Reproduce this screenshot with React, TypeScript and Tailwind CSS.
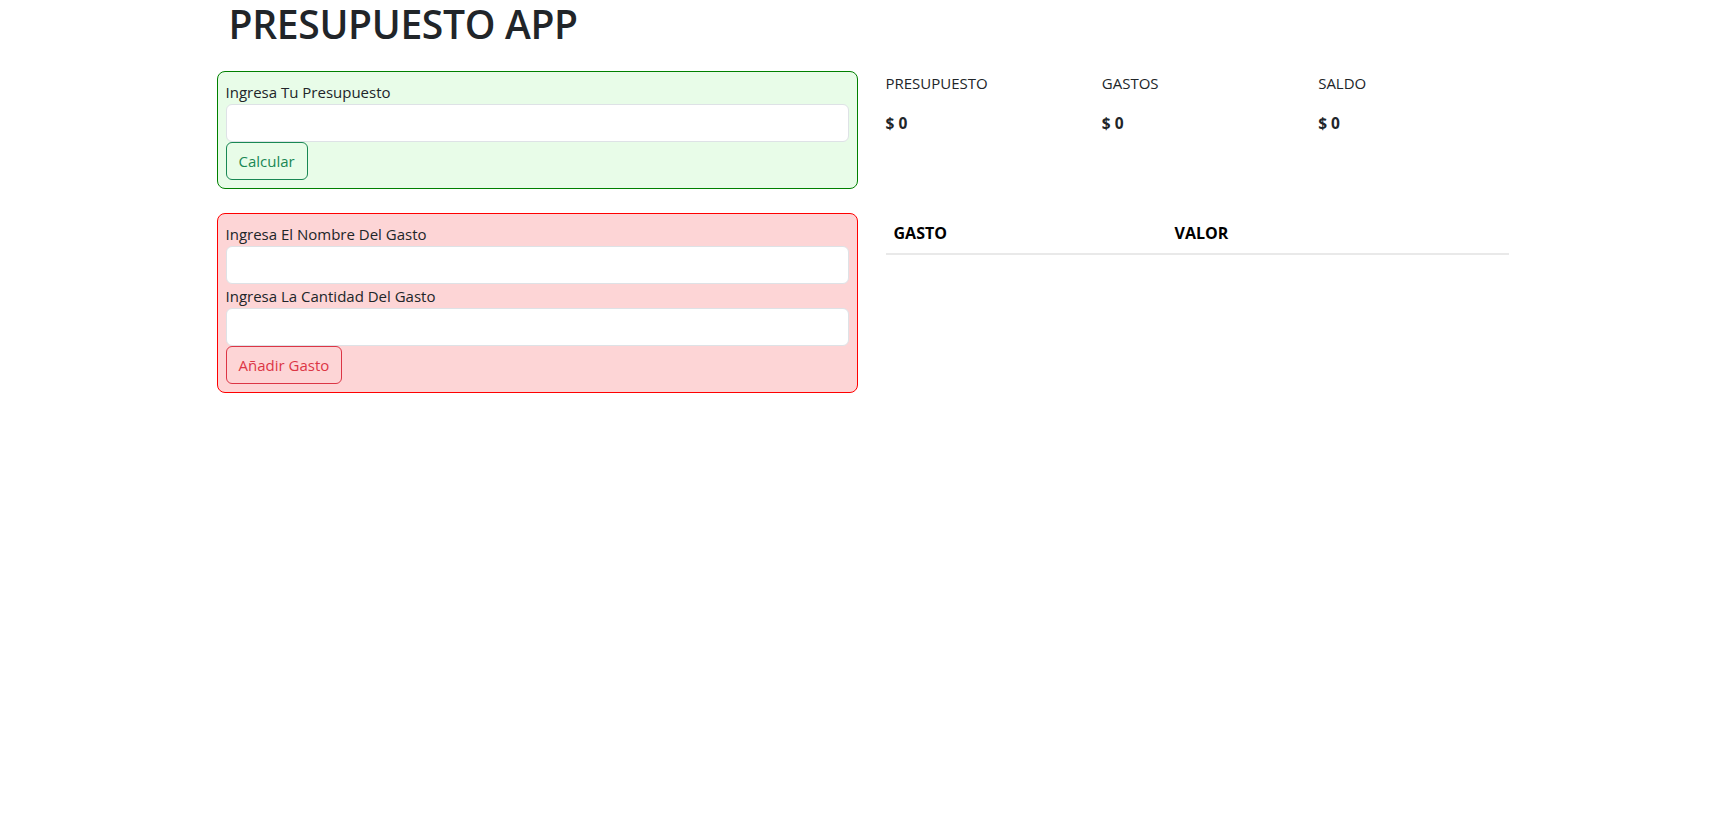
import React, { useState } from 'react';

// Presupuesto app: budget form + expense form on the left, summary + table on the right
export default function App() {
    const [presupuesto, setPresupuesto] = useState('');
    const [nombre, setNombre] = useState('');
    const [cantidad, setCantidad] = useState('');

    const inputCls =
        'block w-full h-[38px] px-3 bg-white border border-[#dee2e6] rounded-[6px] text-[16px] text-[#212529] outline-none';

    return (
        <div className="min-h-screen bg-white text-[#212529] font-['Open_Sans',sans-serif]">
            <div className="mx-auto w-[1320px] pl-[20px]">
                {/* Title */}
                <h1 className="pl-[12px] text-[39px] leading-[48px] font-semibold tracking-[-0.3px] text-[#212529]">
                    PRESUPUESTO APP
                </h1>

                <div className="mt-[23px] flex gap-[28px]">
                    {/* Left Column: Forms */}
                    <div className="w-[641px] shrink-0 flex flex-col gap-[24px]">
                        <div className="p-2 bg-[#e8fce8] border border-[#008000] rounded-[8px]">
                            <label className="block text-[15px] leading-[24px]">Ingresa Tu Presupuesto</label>
                            <input
                                className={inputCls}
                                value={presupuesto}
                                onChange={(e) => setPresupuesto(e.target.value)}
                            />
                            <button className="h-[38px] px-3 border border-[#198754] rounded-[6px] text-[#198754] text-[15px]">
                                Calcular
                            </button>
                        </div>

                        <div className="p-2 bg-[#fdd5d6] border border-[#ff0000] rounded-[8px]">
                            <label className="block text-[15px] leading-[24px]">Ingresa El Nombre Del Gasto</label>
                            <input
                                className={inputCls}
                                value={nombre}
                                onChange={(e) => setNombre(e.target.value)}
                            />
                            <label className="block text-[15px] leading-[24px]">Ingresa La Cantidad Del Gasto</label>
                            <input
                                className={inputCls}
                                value={cantidad}
                                onChange={(e) => setCantidad(e.target.value)}
                            />
                            <button className="h-[38px] px-3 border border-[#dc3545] rounded-[6px] text-[#dc3545] text-[15px]">
                                Añadir Gasto
                            </button>
                        </div>
                    </div>

                    {/* Right Column: Summary & Table */}
                    <div className="w-[649px] shrink-0">
                        <div className="grid grid-cols-3">
                            {['PRESUPUESTO', 'GASTOS', 'SALDO'].map((label) => (
                                <div key={label}>
                                    <p className="text-[15px] leading-[24px]">{label}</p>
                                    <p className="mt-[16px] text-[15.5px] leading-[24px] font-bold">$ 0</p>
                                </div>
                            ))}
                        </div>

                        <div className="mt-[78px] w-[623px]">
                            <div className="grid grid-cols-[281px_1fr] border-b-2 border-[#e9e9e9] text-black font-bold text-[16px] leading-[24px]">
                                <div className="px-2 py-2">GASTO</div>
                                <div className="px-2 py-2">VALOR</div>
                            </div>
                        </div>
                    </div>
                </div>
            </div>
        </div>
    );
}
